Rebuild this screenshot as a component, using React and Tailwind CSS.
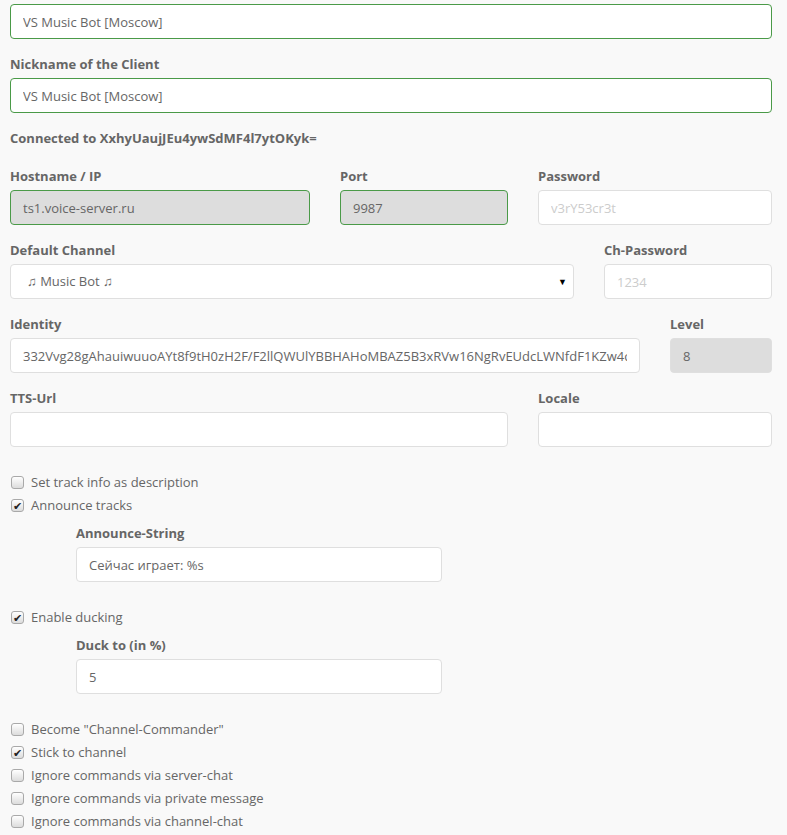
const font = { fontFamily: '"Open Sans", "Noto Sans", sans-serif' };

function Label({ children }) {
  return <div className="h-5 leading-5 mb-1 text-[13px] font-bold text-[#666]">{children}</div>;
}

function Field({ value, placeholder, green, disabled }) {
  const border = green ? 'border-[#4a9a48]' : 'border-[#dfdfdf]';
  const bg = disabled ? 'bg-[#dddddd]' : 'bg-white';
  return (
    <input
      readOnly
      value={value || ''}
      placeholder={placeholder}
      className={`block w-full h-[35px] px-3 rounded-[4px] border ${border} ${bg} text-[13px] text-[#666] placeholder:text-[#ccc] outline-none`}
      style={font}
    />
  );
}

function Check({ checked, children }) {
  return (
    <div className="h-[23px] flex items-center text-[13px] text-[#666]">
      <span className="ml-px w-[13px] h-[13px] rounded-[3px] border border-[#a9a9a9] bg-gradient-to-b from-white to-[#dcdcdc] flex items-center justify-center text-[11px] leading-none text-[#222]">
        {checked ? '✔' : ''}
      </span>
      <span className="ml-[7px]">{children}</span>
    </div>
  );
}

export default function App() {
  return (
    <div className="min-h-screen bg-[#f9f9f9] pl-[10px] pr-[15px] pt-1 pb-4" style={font}>
      <Field value="VS Music Bot [Moscow]" green />

      <div className="mt-[15px]">
        <Label>Nickname of the Client</Label>
        <Field value="VS Music Bot [Moscow]" green />
      </div>

      <div className="mt-[15px] h-5 leading-5 text-[13px] font-bold text-[#666]">
        Connected to XxhyUaujJEu4ywSdMF4l7ytOKyk=
      </div>

      <div className="mt-[18px] grid grid-cols-12 gap-x-[30px]">
        <div className="col-span-5">
          <Label>Hostname / IP</Label>
          <Field value="ts1.voice-server.ru" green disabled />
        </div>
        <div className="col-span-3">
          <Label>Port</Label>
          <Field value="9987" green disabled />
        </div>
        <div className="col-span-4">
          <Label>Password</Label>
          <Field placeholder="v3rY53cr3t" />
        </div>
      </div>

      <div className="mt-[15px] grid grid-cols-12 gap-x-[30px]">
        <div className="col-span-9">
          <Label>Default Channel</Label>
          <div className="h-[35px] pl-4 pr-[6px] rounded-[4px] border border-[#dfdfdf] bg-white flex items-center justify-between text-[13px] text-[#666]">
            <span>♫ Music Bot ♫</span>
            <span className="text-[9px] text-black">▼</span>
          </div>
        </div>
        <div className="col-span-3">
          <Label>Ch-Password</Label>
          <Field placeholder="1234" />
        </div>
      </div>

      <div className="mt-[15px] grid grid-cols-12 gap-x-[30px]">
        <div className="col-span-10">
          <Label>Identity</Label>
          <Field value="332Vvg28gAhauiwuuoAYt8f9tH0zH2F/F2llQWUlYBBHAHoMBAZ5B3xRVw16NgRvEUdcLWNfdF1KZw4cBnQJc1QFX2ZeQ" />
        </div>
        <div className="col-span-2">
          <Label>Level</Label>
          <Field value="8" disabled />
        </div>
      </div>

      <div className="mt-[15px] grid grid-cols-12 gap-x-[30px]">
        <div className="col-span-8">
          <Label>TTS-Url</Label>
          <Field />
        </div>
        <div className="col-span-4">
          <Label>Locale</Label>
          <Field />
        </div>
      </div>

      <div className="mt-[24px]">
        <Check>Set track info as description</Check>
        <Check checked>Announce tracks</Check>
        <div className="mt-[6px] grid grid-cols-12 gap-x-[30px]">
          <div className="col-start-2 col-span-6">
            <Label>Announce-String</Label>
            <Field value="Сейчас играет: %s" />
          </div>
        </div>

        <div className="mt-[24px]">
          <Check checked>Enable ducking</Check>
        </div>
        <div className="mt-[6px] grid grid-cols-12 gap-x-[30px]">
          <div className="col-start-2 col-span-6">
            <Label>Duck to (in %)</Label>
            <Field value="5" />
          </div>
        </div>

        <div className="mt-[24px]">
          <Check>Become "Channel-Commander"</Check>
          <Check checked>Stick to channel</Check>
          <Check>Ignore commands via server-chat</Check>
          <Check>Ignore commands via private message</Check>
          <Check>Ignore commands via channel-chat</Check>
        </div>
      </div>
    </div>
  );
}
